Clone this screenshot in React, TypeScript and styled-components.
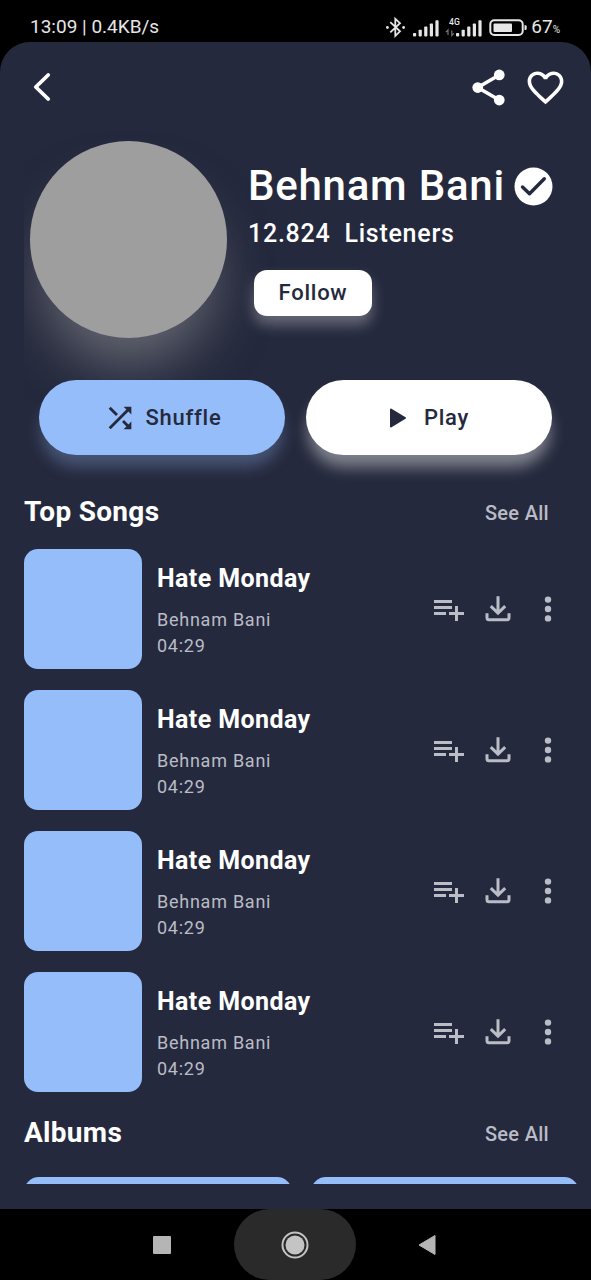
import React from "react";
import styled, { createGlobalStyle } from "styled-components";

const NAVY = "#25293d";
const BLUE = "#95bdfa";
const MUTED = "#babcc6";

const Global = createGlobalStyle`
  * { box-sizing: border-box; }
  body { margin: 0; background: #000; font-family: Roboto, "Noto Sans", sans-serif; color: #fff; }
  svg { display: block; flex: none; }
`;

const Phone = styled.div`
  width: 591px;
  height: 1280px;
  display: flex;
  flex-direction: column;
  background: #000;
  overflow: hidden;
`;

const StatusBar = styled.div`
  height: 42px;
  flex: none;
  display: flex;
  justify-content: space-between;
  align-items: flex-start;
  padding: 14px 31px 0 30px;
  color: #e6e6e6;
`;

const StatusText = styled.span`
  font-size: 19px;
  line-height: 25px;
  font-weight: 400;
  letter-spacing: 0;
  white-space: nowrap;
`;

const StatusRight = styled.div`
  display: flex;
  align-items: flex-start;
`;

const Percent = styled.small`
  font-size: 10px;
`;

const Screen = styled.main`
  height: 1167px;
  flex: none;
  background: ${NAVY};
  border-radius: 30px 30px 0 0;
  padding: 0 24px;
  display: flex;
  flex-direction: column;
`;

const TopBar = styled.header`
  height: 90px;
  flex: none;
  display: flex;
  align-items: center;
  justify-content: space-between;
  padding: 0 0 0 8px;
`;

const TopActions = styled.div`
  display: flex;
  align-items: center;
  gap: 14px;
`;

const Artist = styled.section`
  display: flex;
  height: 248px;
  flex: none;
  padding: 9px 0 0 6px;
`;

const AvatarClip = styled.div`
  height: 197px;
  clip-path: inset(-60px -110px -140px -6px);
`;

const Avatar = styled.div`
  width: 197px;
  height: 197px;
  border-radius: 50%;
  background: #9e9e9e;
  box-shadow: 0 40px 56px -14px rgba(170, 170, 170, 0.5);
`;

const ArtistInfo = styled.div`
  display: flex;
  flex-direction: column;
  align-items: flex-start;
  padding: 20px 0 0 21px;
  position: relative;
`;

const NameRow = styled.div`
  display: flex;
  align-items: center;
  gap: 16px;
  height: 50px;
`;

const Name = styled.h1`
  margin: 0;
  width: 250px;
  font-size: 42px;
  line-height: 50px;
  font-weight: 500;
  letter-spacing: 0.75px;
  white-space: nowrap;
`;

const Listeners = styled.div`
  margin-top: 8px;
  font-size: 25px;
  line-height: 30px;
  font-weight: 500;
  letter-spacing: 0.75px;
  white-space: pre;
`;

const Follow = styled.button`
  margin: 21px 0 0 6px;
  width: 118px;
  height: 46px;
  border: 0;
  border-radius: 13px;
  padding: 0;
  background: #fff;
  color: ${NAVY};
  font: 500 22px/46px Roboto, sans-serif;
  letter-spacing: 0.75px;
  box-shadow: 0 9px 14px rgba(255, 255, 255, 0.3);
`;

const Actions = styled.section`
  display: flex;
  gap: 21px;
  padding-left: 15px;
  height: 75px;
  flex: none;
`;

const Pill = styled.button<{ $bg: string; $glow: string; $gap: number }>`
  width: 246px;
  height: 75px;
  border: 0;
  border-radius: 38px;
  padding: 0;
  display: flex;
  align-items: center;
  justify-content: center;
  gap: ${(p) => p.$gap}px;
  background: ${(p) => p.$bg};
  color: ${NAVY};
  font: 500 22px/28px Roboto, sans-serif;
  letter-spacing: 0.75px;
  box-shadow: 0 14px 15px -2px ${(p) => p.$glow};
  position: relative;
`;

const SectionHead = styled.div<{ $top: number }>`
  margin-top: ${(p) => p.$top}px;
  height: 36px;
  flex: none;
  display: flex;
  justify-content: space-between;
  align-items: center;
  padding-right: 18px;
`;

const SectionTitle = styled.h2`
  margin: 0;
  font-size: 28px;
  line-height: 36px;
  font-weight: 700;
  letter-spacing: 0.3px;
`;

const SeeAll = styled.a`
  color: ${MUTED};
  font-size: 20px;
  line-height: 24px;
  font-weight: 500;
  letter-spacing: 0.3px;
  padding-top: 2px;
`;

const Songs = styled.ul`
  list-style: none;
  margin: 18.6px 0 0;
  padding: 0;
  display: flex;
  flex-direction: column;
  gap: 21.3px;
`;

const Song = styled.li`
  height: 120px;
  display: flex;
`;

const Cover = styled.div`
  width: 118px;
  height: 120px;
  border-radius: 14px;
  background: ${BLUE};
`;

const SongText = styled.div`
  flex: 1;
  padding: 14px 0 0 15px;
`;

const SongTitle = styled.div`
  font-size: 25px;
  line-height: 32px;
  font-weight: 700;
  letter-spacing: 0.4px;
`;

const SongMeta = styled.div<{ $top?: number }>`
  margin-top: ${(p) => p.$top ?? 0}px;
  font-size: 18px;
  line-height: 26px;
  letter-spacing: 0.75px;
  color: ${MUTED};
`;

const SongActions = styled.div`
  display: flex;
  align-items: center;
  color: ${MUTED};
`;

const Albums = styled.div`
  margin-top: 26px;
  height: 7px;
  flex: none;
  width: 567px;
  display: flex;
  gap: 19px;
  overflow: hidden;
`;

const Album = styled.div`
  width: 268px;
  height: 180px;
  flex: none;
  border-radius: 15px;
  background: ${BLUE};
`;

const NavBar = styled.nav`
  height: 71px;
  flex: none;
  display: flex;
  align-items: center;
  padding-left: 153px;
  background: #000;
`;

const HomeKey = styled.div`
  width: 122px;
  height: 71px;
  border-radius: 35.5px;
  margin: 0 62px 0 63px;
  background: #2a2a2a;
  display: flex;
  align-items: center;
  justify-content: center;
`;

const SystemIcons = () => (
  <svg width="146" height="26" viewBox="385 12 146 26" fill="#e6e6e6">
    <path d="M390.3 20.2 400 29.3 395.3 33.8V16.8L400 21.2 390.3 30.3" fill="none" stroke="#e6e6e6" strokeWidth="1.8" />
    <circle cx="387.4" cy="25.5" r="1.4" />
    <circle cx="403.6" cy="25.5" r="1.4" />
    {[0, 1, 2, 3, 4].map((i) => (
      <React.Fragment key={i}>
        <rect x={413 + i * 5.6} y={31 - i * 3.2} width="3.2" height={3.4 + i * 3.2} rx="0.8" />
        <rect x={456 + i * 5.6} y={31 - i * 3.2} width="3.2" height={3.4 + i * 3.2} rx="0.8" />
      </React.Fragment>
    ))}
    <text x="449" y="23" fontSize="8.6" fontWeight="500" fontFamily="Roboto, sans-serif">4G</text>
    <path d="M448 33v-5l-2 2.2M451.8 28.500v5l2-2.200" fill="none" stroke="#777" strokeWidth="1.2" />
    <rect x="490.3" y="18.200" width="32.400" height="14.800" rx="4" fill="none" stroke="#e6e6e6" strokeWidth="2" />
    <rect x="493.500" y="21.400" width="18.500" height="8.500" rx="1" />
    <path d="M524.500 23.300h1a1.200 1.200 0 0 1 1.200 1.200v2.200a1.200 1.200 0 0 1-1.200 1.200h-1z" />
  </svg>
);

const BackIcon = () => (
  <svg width="20" height="34" viewBox="0 0 20 34" fill="none" stroke="#fff" strokeWidth="3.8" strokeLinecap="round" strokeLinejoin="round">
    <path d="M16.200 5 3.800 17l12.400 12" />
  </svg>
);

const ShareIcon = () => (
  <svg width="43" height="43" viewBox="0 0 24 24" fill="#fff">
    <path d="M18 5 6 12l12 7" fill="none" stroke="#fff" strokeWidth="2" />
    <circle cx="18" cy="5" r="3" />
    <circle cx="6" cy="12" r="3" />
    <circle cx="18" cy="19" r="3" />
  </svg>
);

const HeartIcon = () => (
  <svg width="43" height="43" viewBox="0 0 24 24" fill="#fff">
    <path d="M16.5 3c-1.74 0-3.41.81-4.500 2.090C10.910 3.810 9.240 3 7.500 3 4.420 3 2 5.420 2 8.500c0 3.780 3.400 6.860 8.550 11.540L12 21.350l1.450-1.320C18.600 15.360 22 12.280 22 8.500 22 5.420 19.580 3 16.500 3zm-4.400 15.550-.1.1-.1-.1C7.140 14.240 4 11.390 4 8.500 4 6.500 5.500 5 7.500 5c1.540 0 3.040.99 3.570 2.360h1.870C13.460 5.990 14.960 5 16.500 5c2 0 3.500 1.500 3.500 3.500 0 2.890-3.140 5.740-7.900 10.050z" />
  </svg>
);

const VerifiedIcon = () => (
  <svg width="39" height="39" viewBox="0 0 39 39">
    <circle cx="19.500" cy="19.500" r="19" fill="#fff" />
    <path d="m8.500 20 7 6.800 14.800-15" fill="none" stroke={NAVY} strokeWidth="3.400" strokeLinecap="round" strokeLinejoin="round" />
  </svg>
);

const ShuffleIcon = () => (
  <svg width="34" height="34" viewBox="0 0 24 24" fill={NAVY}>
    <path d="M10.590 9.170 5.410 4 4 5.410l5.170 5.170 1.420-1.410zM14.500 4l2.040 2.040L4 18.590 5.410 20 17.960 7.460 20 9.500V4h-5.500zm.33 9.410-1.410 1.410 3.130 3.130L14.500 20H20v-5.500l-2.040 2.040-3.130-3.130z" />
  </svg>
);

const PlayIcon = () => (
  <svg width="18" height="22" viewBox="0 0 18 22" fill={NAVY} stroke={NAVY} strokeWidth="2" strokeLinejoin="round">
    <path d="M2 2.500 16 11 2 19.500z" />
  </svg>
);

const SongIcons = () => (
  <SongActions>
    <svg width="36" height="36" viewBox="0 0 24 24" fill="currentColor">
      <path d="M14 10H2v2h12v-2zm0-4H2v2h12V6zm4 8v-4h-2v4h-4v2h4v4h2v-4h4v-2h-4zM2 16h8v-2H2v2z" />
    </svg>
    <svg width="26" height="26" viewBox="0 0 26 26" fill="none" stroke="currentColor" strokeWidth="3" style={{ marginLeft: 18 }}>
      <path d="M13 .3v16M5.800 10.200l7.200 7 7.200-7M2 17.300v4.500a2 2 0 0 0 2 2h18a2 2 0 0 0 2-2v-4.500" />
    </svg>
    <svg width="8" height="28" viewBox="0 0 8 28" fill="currentColor" style={{ margin: "0 15px 0 33px" }}>
      <circle cx="4" cy="4.600" r="3.200" />
      <circle cx="4" cy="14" r="3.200" />
      <circle cx="4" cy="23.400" r="3.200" />
    </svg>
  </SongActions>
);

export default function App() {
  return (
    <Phone>
      <Global />
      <StatusBar>
        <StatusText>13:09 | 0.4KB/s</StatusText>
        <StatusRight>
          <SystemIcons />
          <StatusText>67<Percent>%</Percent></StatusText>
        </StatusRight>
      </StatusBar>
      <Screen>
        <TopBar>
          <BackIcon />
          <TopActions>
            <ShareIcon />
            <HeartIcon />
          </TopActions>
        </TopBar>
        <Artist>
          <AvatarClip><Avatar /></AvatarClip>
          <ArtistInfo>
            <NameRow>
              <Name>Behnam Bani</Name>
              <VerifiedIcon />
            </NameRow>
            <Listeners>12.824  Listeners</Listeners>
            <Follow>Follow</Follow>
          </ArtistInfo>
        </Artist>
        <Actions>
          <Pill $bg={BLUE} $glow="rgba(149,189,250,.3)" $gap={9}>
            <ShuffleIcon />
            Shuffle
          </Pill>
          <Pill $bg="#fff" $glow="rgba(255,255,255,.42)" $gap={17}>
            <PlayIcon />
            Play
          </Pill>
        </Actions>
        <SectionHead $top={39}>
          <SectionTitle>Top Songs</SectionTitle>
          <SeeAll>See All</SeeAll>
        </SectionHead>
        <Songs>
          {[0, 1, 2, 3].map((i) => (
            <Song key={i}>
              <Cover />
              <SongText>
                <SongTitle>Hate Monday</SongTitle>
                <SongMeta $top={12}>Behnam Bani</SongMeta>
                <SongMeta>04:29</SongMeta>
              </SongText>
              <SongIcons />
            </Song>
          ))}
        </Songs>
        <SectionHead $top={23}>
          <SectionTitle>Albums</SectionTitle>
          <SeeAll>See All</SeeAll>
        </SectionHead>
        <Albums>
          <Album />
          <Album />
        </Albums>
      </Screen>
      <NavBar>
        <svg width="18" height="18" viewBox="0 0 18 18"><rect width="18" height="18" rx="1" fill="#b5b5b5" /></svg>
        <HomeKey>
          <svg width="28" height="28" viewBox="0 0 28 28">
            <circle cx="14" cy="14" r="12.500" fill="none" stroke="#c4c4c4" strokeWidth="2" />
            <circle cx="14" cy="14" r="9.500" fill="#c4c4c4" />
          </svg>
        </HomeKey>
        <svg width="18" height="22" viewBox="0 0 18 22"><path d="M17 1.500v19L1 11z" fill="#b5b5b5" stroke="#b5b5b5" strokeLinejoin="round" /></svg>
      </NavBar>
    </Phone>
  );
}
